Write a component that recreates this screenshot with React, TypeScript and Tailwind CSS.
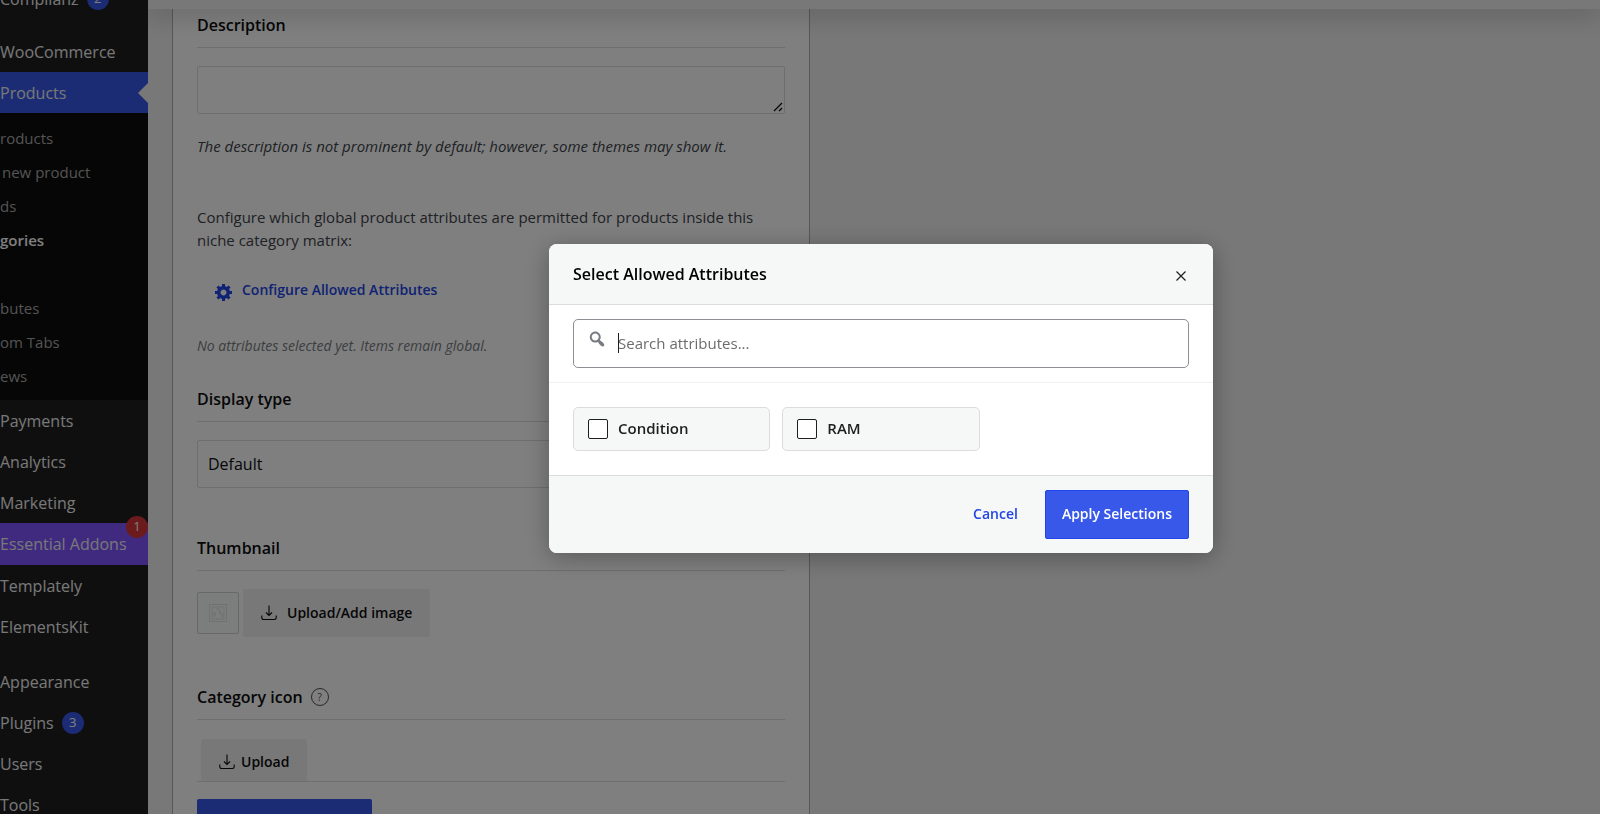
import React, { useState } from 'react';

const subMenu = ['roducts', 'new product', 'ds', 'gories', '', 'butes', 'om Tabs', 'ews'];

const attributes = ['Condition', 'RAM'];

interface MenuItemProps {
  label: string;
  badge?: string;
  className?: string;
}

const MenuItem: React.FC<MenuItemProps> = ({ label, badge, className = '' }) => (
  <a href="#" className={`flex h-[41px] items-center whitespace-nowrap text-base text-[#f0f0f1] ${className}`}>
    {label}
    {badge && (
      <span className="ml-2 flex size-[22px] items-center justify-center rounded-full bg-[#3858e9] text-[13px] text-white">
        {badge}
      </span>
    )}
  </a>
);

const UploadIcon: React.FC = () => (
  <svg viewBox="0 0 16 16" className="size-4" fill="none" stroke="currentColor" strokeWidth="1.1" aria-hidden="true">
    <path d="M8 .5v10M5 7.5l3 3 3-3M.8 10.5v2.3a1.7 1.7 0 0 0 1.7 1.7h11a1.7 1.7 0 0 0 1.7-1.7v-2.3" />
  </svg>
);

const GearIcon: React.FC = () => (
  <svg viewBox="0 0 20 20" className="mt-1 size-5" fill="currentColor" aria-hidden="true">
    <path d="M18 12h-2.18c-.17.7-.44 1.35-.81 1.93l1.54 1.54-2.1 2.1-1.54-1.54c-.58.36-1.23.63-1.91.79V19H8v-2.18c-.68-.16-1.33-.43-1.91-.79l-1.54 1.54-2.12-2.12 1.54-1.54c-.36-.58-.63-1.23-.79-1.91H1V9.03h2.17c.16-.7.44-1.35.8-1.94L2.43 5.55l2.1-2.1 1.54 1.54c.58-.37 1.24-.64 1.93-.81V2h3v2.18c.68.16 1.33.43 1.91.79l1.54-1.54 2.12 2.12-1.54 1.54c.36.59.64 1.24.8 1.94H18V12zm-8.5 1.5c1.66 0 3-1.34 3-3s-1.34-3-3-3-3 1.34-3 3 1.34 3 3 3z" />
  </svg>
);

const SearchIcon: React.FC = () => (
  <svg viewBox="0 0 20 20" className="size-5" fill="currentColor" aria-hidden="true">
    <path d="M12.14 4.18c1.87 1.87 2.11 4.75.72 6.89.12.1.22.21.36.31.2.16.47.36.81.59.34.24.56.39.66.47.42.31.73.57.94.78.32.32.6.65.84 1 .25.35.44.69.59 1.04.14.35.21.68.18 1-.02.32-.14.59-.36.81s-.49.34-.81.36c-.31.02-.65-.04-.99-.19-.35-.14-.7-.34-1.04-.59-.35-.24-.68-.52-1-.84-.21-.21-.47-.52-.77-.93-.1-.13-.25-.35-.47-.66-.22-.32-.4-.57-.56-.78-.16-.2-.29-.35-.44-.5-2.07 1.09-4.69.76-6.44-.98-2.14-2.15-2.14-5.64 0-7.78 2.15-2.15 5.63-2.15 7.78 0zm-1.41 6.36c1.36-1.37 1.36-3.58 0-4.95-1.37-1.37-3.59-1.37-4.95 0-1.37 1.37-1.37 3.58 0 4.95 1.36 1.37 3.58 1.37 4.95 0z" />
  </svg>
);

const Sidebar: React.FC = () => (
  <nav className="w-[148px] shrink-0 bg-[#1e1e1e]">
    <div className="-mt-[22px]">
      <MenuItem label="Complianz" badge="2" className="mb-3" />
      <MenuItem label="WooCommerce" />
      <div className="relative bg-[#3858e9]">
        <MenuItem label="Products" />
        <span className="absolute top-[11px] right-0 border-y-[10px] border-r-[10px] border-y-transparent border-r-[#f0f0f1]" />
      </div>
      <div className="bg-[#0c0c0c] pt-2 pb-[7px]">
        {subMenu.map((label, index) => (
          <a
            key={index}
            href="#"
            className={`flex h-[34px] items-center text-[15px] whitespace-nowrap ${
              label === 'gories' ? 'font-semibold text-white' : 'text-[#a8a8a8]'
            } ${label === 'new product' ? 'pl-0.5' : ''}`}
          >
            {label}
          </a>
        ))}
      </div>
      <MenuItem label="Payments" />
      <MenuItem label="Analytics" />
      <MenuItem label="Marketing" />
      <div className="relative bg-[#7f54ff] pb-px">
        <MenuItem label="Essential Addons" />
        <span className="absolute -top-[7px] right-0 flex size-[22px] items-center justify-center rounded-full bg-[#d63638] text-[13px] text-white">
          1
        </span>
      </div>
      <MenuItem label="Templately" />
      <MenuItem label="ElementsKit" className="mb-3.5" />
      <MenuItem label="Appearance" />
      <MenuItem label="Plugins" badge="3" />
      <MenuItem label="Users" />
      <MenuItem label="Tools" />
    </div>
  </nav>
);

const CategoryForm: React.FC = () => (
  <form className="w-[638px] border-x border-[#b0b0b0] bg-white px-6 text-[#0c0c0c]">
    <label htmlFor="description" className="block border-b border-[#dcdcde] pt-[5px] pb-2.5 text-base leading-6 font-semibold">
      Description
    </label>
    <div className="relative mt-[18px]">
      <textarea id="description" className="block h-12 w-full resize-none rounded-xs border border-[#dcdcde]" />
      <svg viewBox="0 0 10 10" className="absolute right-0.5 bottom-0.5 size-2.5" stroke="#0c0c0c" strokeWidth="1.3" aria-hidden="true">
        <path d="M1 9l8-8M6 9l3-3" />
      </svg>
    </div>
    <p className="mt-5 text-[15px] leading-6 text-[#3c434a] italic">
      The description is not prominent by default; however, some themes may show it.
    </p>

    {/* Attributes */}
    <p className="mt-12 text-[15px] leading-[23px] text-[#3c434a]">
      Configure which global product attributes are permitted for products inside this niche category matrix:
    </p>
    <button type="button" className="mt-[26px] ml-[17px] flex items-start gap-2 text-sm leading-6 font-semibold text-[#2145e6]">
      <GearIcon />
      Configure Allowed Attributes
    </button>
    <p className="mt-8 text-sm leading-6 text-[#787c82] italic">No attributes selected yet. Items remain global.</p>

    <label htmlFor="display-type" className="mt-[25px] block border-b border-[#dcdcde] pt-1 pb-2.5 text-base leading-6 font-semibold">
      Display type
    </label>
    <select id="display-type" className="mt-[18px] block h-12 w-full appearance-none rounded-xs border border-[#dcdcde] px-2.5 text-base">
      <option>Default</option>
    </select>

    {/* Thumbnail */}
    <h3 className="mt-12 border-b border-[#dcdcde] pb-2.5 text-base leading-6 font-semibold">Thumbnail</h3>
    <div className="mt-[18px] flex items-center gap-1">
      <span className="flex size-[42px] items-center justify-center rounded-xs border border-[#d0d0d0] bg-[#f8fafa]">
        <svg viewBox="0 0 18 18" className="size-[18px]" fill="none" stroke="#e0e4e4" aria-hidden="true">
          <path d="M.5.5h17v17H.5zM3 3h12v12H3zM4 12l2-4M6 8v5M7 6c2-3 5-1 3 2l3 5M10 8c3 0 5 2 3 5" />
        </svg>
      </span>
      <button type="button" className="flex h-12 items-center gap-2.5 rounded-xs bg-[#f0f0f0] px-[18px] text-sm font-semibold">
        <UploadIcon />
        Upload/Add image
      </button>
    </div>

    {/* Category icon */}
    <h3 className="mt-12 flex items-center gap-2 border-b border-[#dcdcde] pb-2.5 text-base leading-6 font-semibold">
      Category icon
      <span className="flex size-[18px] items-center justify-center rounded-full border border-[#505050] text-[10px] font-normal text-[#505050]">?</span>
    </h3>
    <div className="border-b border-[#dcdcde] pt-[19px] pl-1">
      <button type="button" className="flex h-[42px] items-center gap-1.5 rounded-t-xs bg-[#f0f0f0] px-[18px] pt-1 text-sm font-semibold">
        <UploadIcon />
        Upload
      </button>
    </div>
    <button type="submit" aria-label="Save category" className="mt-[17px] block h-12 w-[175px] rounded-xs bg-[#3858e9]" />
  </form>
);

const AttributeModal: React.FC = () => {
  const [search, setSearch] = useState('');

  return (
    <div className="fixed inset-0 flex items-center justify-center bg-black/50 pb-[18px] pl-[162px]">
      <div role="dialog" aria-label="Select Allowed Attributes" className="w-[664px] overflow-hidden rounded-lg bg-white text-[#1e1e1e] shadow-[0_4px_24px_rgba(0,0,0,0.3)]">
        <div className="flex h-[61px] items-center justify-between border-b border-[#dcdcde] bg-[#f6f7f7] px-6">
          <h2 className="text-base font-semibold text-black">Select Allowed Attributes</h2>
          <button type="button" aria-label="Close" className="flex size-4 items-center justify-center pt-1">
            <svg viewBox="0 0 10 10" className="size-2.5" fill="none" stroke="currentColor" strokeWidth="1.2" aria-hidden="true">
              <path d="M.5.5l9 9M9.5.5l-9 9" />
            </svg>
          </button>
        </div>

        <div className="border-b border-[#f0f0f1] px-6 py-3.5">
          <div className="relative">
            <span className="absolute top-2.5 left-3.5 text-[#787c82]">
              <SearchIcon />
            </span>
            <input
              type="text"
              aria-label="Search attributes"
              value={search}
              onChange={e => setSearch(e.target.value)}
              className="block h-[49px] w-full rounded-[5px] border border-[#8c8f94] pr-4 pl-11 text-[15px] outline-none placeholder:text-[#6c6c6c]"
              placeholder="Search attributes..."
            />
            {!search && <span className="absolute top-3.5 left-[45px] h-5 w-px bg-[#1e1e1e]" />}
          </div>
        </div>

        <div className="grid grid-cols-3 gap-3 p-6">
          {attributes.map(name => (
            <label key={name} className="flex h-11 items-center gap-2.5 rounded-[5px] border border-[#dcdcde] bg-[#f6f7f7] px-3.5 text-[15px] font-semibold">
              <input type="checkbox" className="size-5 appearance-none rounded-xs border border-[#1e1e1e] bg-white" />
              {name}
            </label>
          ))}
        </div>

        <div className="flex items-center justify-end gap-[27px] border-t border-[#dcdcde] bg-[#f6f7f7] px-6 py-3.5 text-sm font-semibold">
          <button type="button" className="text-[#2145e6]">Cancel</button>
          <button type="button" className="h-[49px] rounded-xs border border-[#2145e6] bg-[#3858e9] px-4 text-white">
            Apply Selections
          </button>
        </div>
      </div>
    </div>
  );
};

const App: React.FC = () => (
  <div className="flex h-screen overflow-hidden bg-[#f0f0f1] font-['Open_Sans',sans-serif]">
    <Sidebar />
    <main className="relative min-w-0 flex-1 overflow-hidden pt-2 pl-6">
      <div className="absolute inset-x-0 top-0 h-[9px] bg-[#f0f0f1] shadow-[0_4px_24px_rgba(0,0,0,0.35)]" />
      <CategoryForm />
    </main>
    <AttributeModal />
  </div>
);

export default App;
